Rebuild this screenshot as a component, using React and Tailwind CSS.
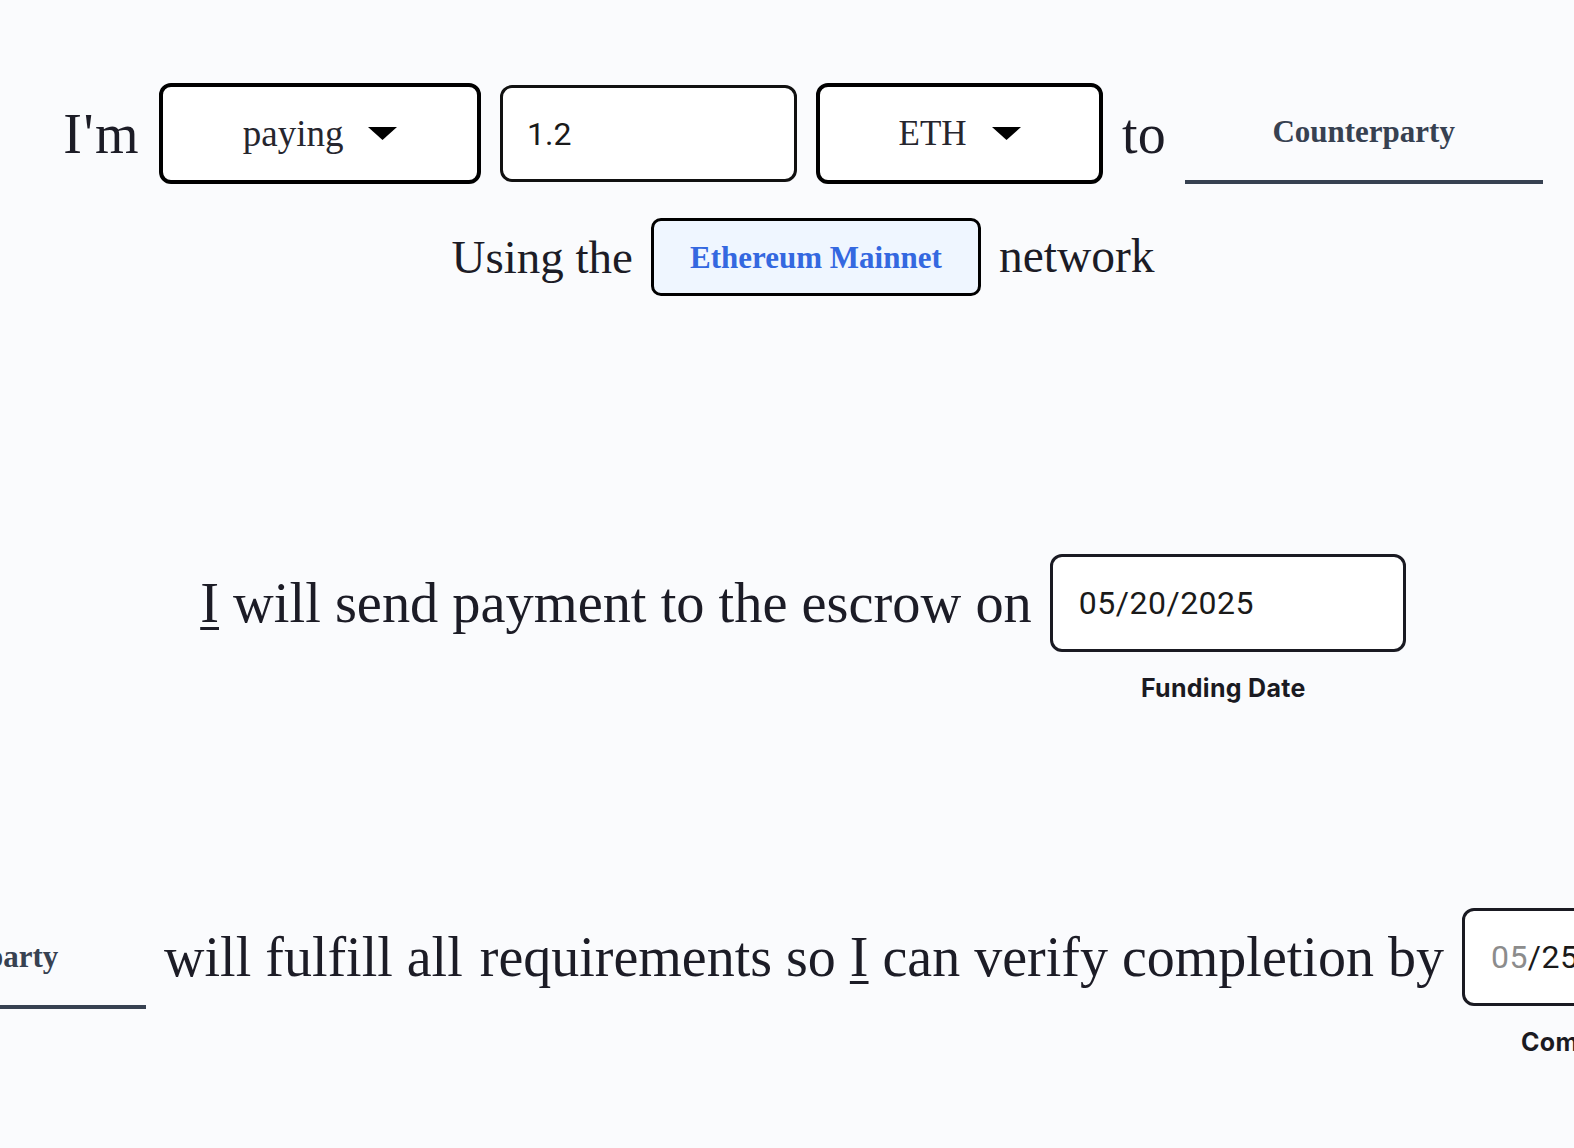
import React from "react";

const serif = { fontFamily: '"Liberation Serif", "Times New Roman", serif' };
const sans = { fontFamily: 'Roboto, "Liberation Sans", Arial, sans-serif' };
const label = { fontFamily: 'Inter, Roboto, "Liberation Sans", Arial, sans-serif' };

function Caret() {
  return (
    <svg width="29" height="13" viewBox="0 0 29 13" className="shrink-0">
      <path d="M0 0H29L14.5 13Z" fill="#000" />
    </svg>
  );
}

function Select({ value, width, size }) {
  return (
    <div
      className={`flex h-[101px] ${width} shrink-0 items-center justify-center gap-[25px] rounded-[12px] border-4 border-black bg-white`}
    >
      <span className={`${size} leading-none text-[#26262e]`} style={serif}>
        {value}
      </span>
      <Caret />
    </div>
  );
}

function Counterparty() {
  return (
    <div className="flex h-[101px] w-[358px] shrink-0 items-center justify-center border-b-4 border-[#374151]">
      <span className="text-[31px] font-bold leading-none text-[#374151]" style={serif}>
        Counterparty
      </span>
    </div>
  );
}

function DateField({ text, labelPad, children }) {
  return (
    <div className="flex shrink-0 flex-col">
      <div
        className="flex h-[98px] w-[356px] items-center rounded-[12px] border-[3px] border-[#1a1a22] bg-white pl-[26px] text-[32px] tracking-[0.5px] text-[#1a1a1a]"
        style={sans}
      >
        {children}
      </div>
      <div
        className={`mt-[22px] ${labelPad} text-center text-[25px] font-bold leading-[28px] tracking-[0.3px] text-[#1a1a22] whitespace-nowrap`}
        style={label}
      >
        {text}
      </div>
    </div>
  );
}

const I = () => (
  <span className="underline decoration-[3px] underline-offset-[5px]">I</span>
);

export default function App() {
  return (
    <div className="min-h-[1148px] w-full overflow-hidden bg-[#fafbfd] pl-[32px] text-[#1c1c26]">
      <div className="flex flex-col items-center pt-[83px]" style={serif}>
        {/* Row 1 */}
        <div className="flex w-max items-center gap-[19px] whitespace-nowrap">
          <span className="text-[56px] leading-none tracking-[1.5px]">I'm</span>
          <Select value="paying" width="w-[322px]" size="text-[37px]" />
          <div
            className="flex h-[97px] w-[297px] shrink-0 items-center rounded-[12px] border-[3px] border-[#111] bg-white pl-[24px] text-[32px] text-[#1a1a1a]"
            style={sans}
          >
            1.2
          </div>
          <Select value="ETH" width="w-[287px]" size="text-[35px]" />
          <span className="text-[56px] leading-none">to</span>
          <Counterparty />
        </div>

        {/* Row 1b */}
        <div className="mt-[34px] flex w-max items-center gap-[18px] whitespace-nowrap">
          <span className="text-[47px] leading-none">Using the</span>
          <div className="flex h-[78px] w-[330px] shrink-0 items-center justify-center rounded-[10px] border-[3px] border-black bg-[#eff6ff]">
            <span className="text-[31px] font-bold leading-none text-[#3468e0]">
              Ethereum Mainnet
            </span>
          </div>
          <span className="text-[47.5px] leading-none">network</span>
        </div>

        {/* Row 2 */}
        <div className="mt-[258px] flex w-max items-start gap-[18px] whitespace-nowrap">
          <div className="flex h-[98px] items-center text-[56.4px] leading-none">
            <span>
              <I /> will send payment to the escrow on
            </span>
          </div>
          <DateField text="Funding Date" labelPad="pr-[9px]">
            05/20/2025
          </DateField>
        </div>

        {/* Row 3 */}
        <div className="mt-[206px] flex w-max items-start gap-[18px] whitespace-nowrap">
          <Counterparty />
          <div className="flex h-[98px] items-center gap-[17px] text-[56px] leading-none">
            <span>will fulfill all</span>
            <span>
              requirements so <I /> can verify completion by
            </span>
          </div>
          <DateField text="Completion Date" labelPad="pr-[30px]">
            <span className="text-[#8c8c8c]">05</span>
            <span>/25/2025</span>
          </DateField>
        </div>
      </div>
    </div>
  );
}
